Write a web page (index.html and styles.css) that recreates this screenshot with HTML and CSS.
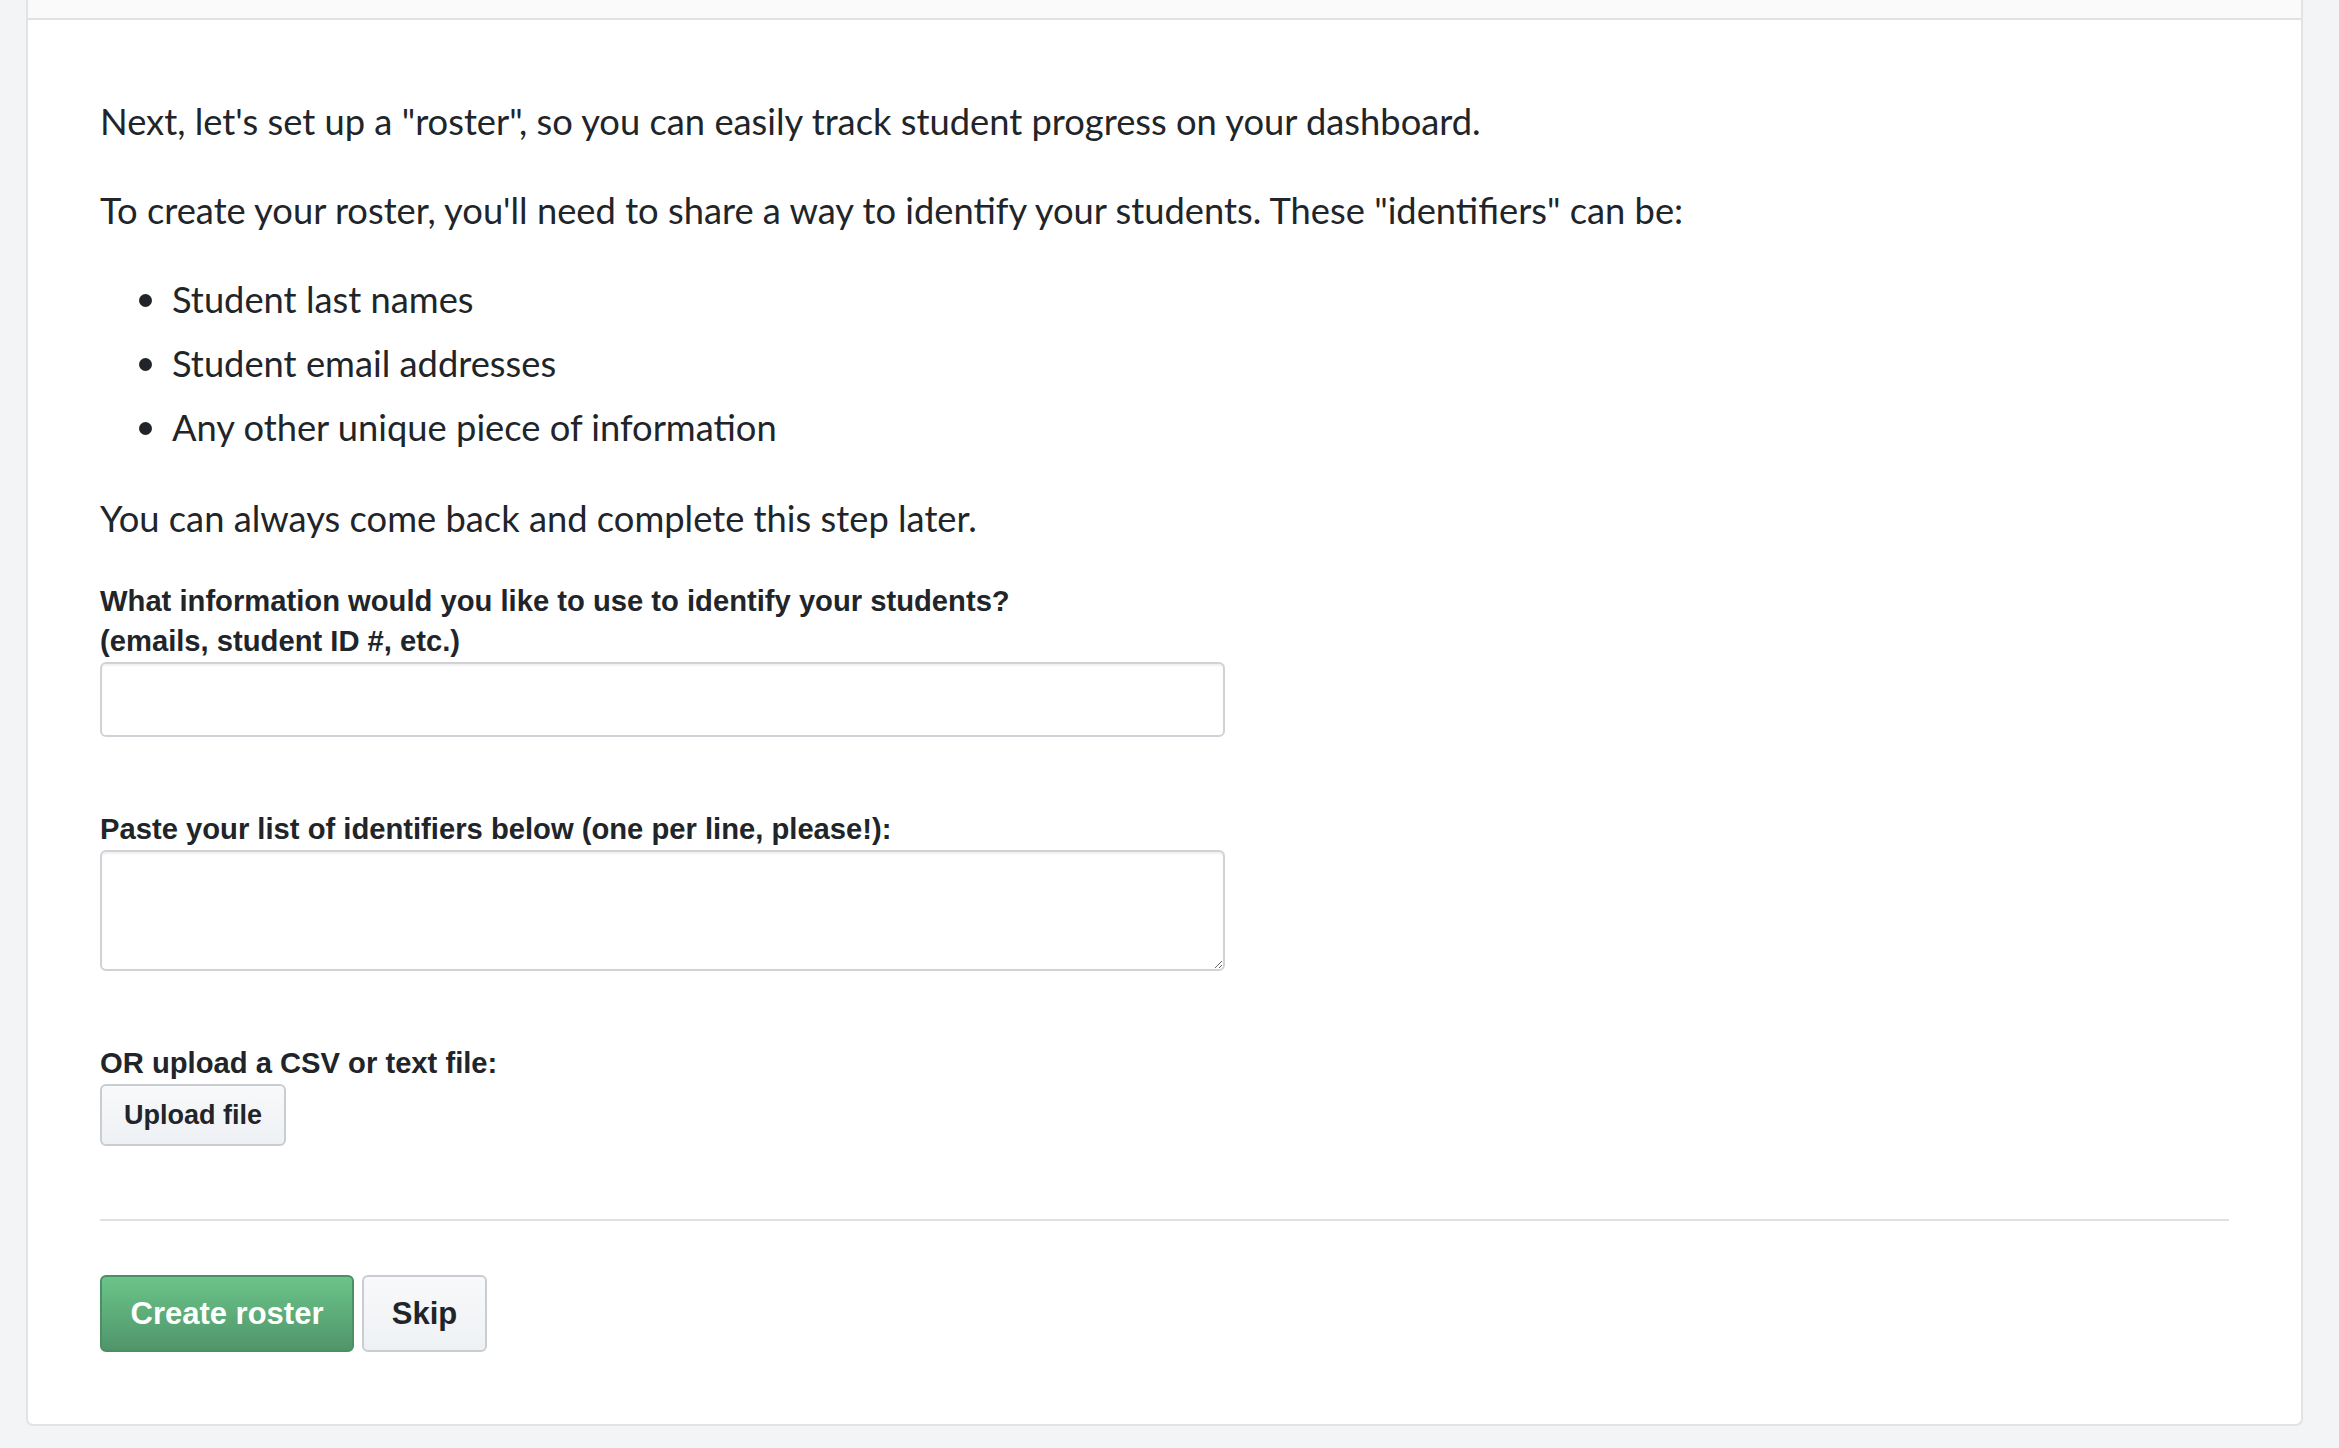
FILE: index.html
```html
<!DOCTYPE html>
<html lang="en">
<head>
<meta charset="utf-8">
<title>Roster setup</title>
<link rel="stylesheet" href="styles.css">
</head>
<body>
<div class="card">
  <div class="card-header"></div>
  <div class="card-body">
    <p class="lead">Next, let's set up a "roster", so you can easily track student progress on your dashboard.</p>
    <p class="lead">To create your roster, you'll need to share a way to identify your students. These "identifiers" can be:</p>
    <ul class="lead-list">
      <li>Student last names</li>
      <li>Student email addresses</li>
      <li>Any other unique piece of information</li>
    </ul>
    <p class="lead">You can always come back and complete this step later.</p>

    <div class="form-group">
      <label class="label" for="ident">What information would you like to use to identify your students?<br>(emails, student ID #, etc.)</label>
      <input class="control input" id="ident" type="text">
    </div>

    <div class="form-group">
      <label class="label" for="list">Paste your list of identifiers below (one per line, please!):</label>
      <textarea class="control textarea" id="list"></textarea>
    </div>

    <div class="form-group upload-group">
      <div class="label">OR upload a CSV or text file:</div>
      <button class="btn btn-light btn-small" type="button">Upload file</button>
    </div>

    <hr class="divider">

    <div class="actions">
      <button class="btn btn-green" type="button">Create roster</button>
      <button class="btn btn-light" type="button">Skip</button>
    </div>
  </div>
</div>
</body>
</html>
```

FILE: styles.css
```css
html, body {
  margin: 0;
  padding: 0;
}

body {
  background: #f3f4f6;
  color: #212529;
  font-family: "Lato", "Open Sans", sans-serif;
  height: 1448px;
  overflow: hidden;
}

.card {
  margin: 0 36px 0 26px;
  background: #ffffff;
  border: 2px solid #e3e3e3;
  border-top: none;
  border-radius: 0 0 7px 7px;
}

.card-header {
  height: 18px;
  background: #fafafa;
  border-bottom: 2px solid #e2e2e2;
}

.card-body {
  padding: 69px 72px 72px 72px;
}

.lead {
  margin: 0 0 25px 0;
  font-size: 36.3px;
  line-height: 64px;
  font-weight: 400;
}

.lead-list {
  margin: 0 0 27px 0;
  padding: 0 0 0 39px;
  list-style: none;
  font-size: 36.3px;
  line-height: 64px;
}

.lead-list li {
  display: flex;
  align-items: center;
}

.lead-list li::before {
  content: "";
  flex: none;
  width: 13px;
  height: 13px;
  border-radius: 50%;
  background: #212529;
  margin-right: 20px;
  margin-top: 2px;
}

.form-group {
  margin-top: 31px;
}

.form-group + .form-group {
  margin-top: 72px;
}

.label {
  display: block;
  font-family: "Liberation Sans", Arial, sans-serif;
  font-weight: 700;
  font-size: 29.2px;
  line-height: 40px;
  margin-bottom: 1px;
  color: #212529;
}

.control {
  display: block;
  box-sizing: border-box;
  width: 1125px;
  border: 2px solid #cfd3d7;
  border-radius: 6px;
  background: #ffffff;
  box-shadow: inset 0 2px 2px rgba(0, 0, 0, 0.06);
  font-family: "Liberation Sans", Arial, sans-serif;
  font-size: 28px;
  padding: 8px 16px;
  margin: 0;
}

.input {
  height: 75px;
}

.textarea {
  height: 121px;
  margin-top: 1px;
  resize: vertical;
}

.btn {
  box-sizing: border-box;
  font-family: "Liberation Sans", Arial, sans-serif;
  font-weight: 700;
  font-size: 31px;
  height: 77px;
  padding: 0 27px;
  border-radius: 6px;
  cursor: pointer;
  margin: 0;
}

.btn-light {
  color: #212529;
  background: linear-gradient(#f8f9fa, #eef1f4);
  border: 2px solid #c9cdd1;
}

.btn-small {
  display: block;
  height: 62px;
  font-size: 27px;
  padding: 0 22px;
  width: 186px;
}

.btn-green {
  color: #ffffff;
  background: linear-gradient(#6bc489, #50956a);
  border: 2px solid #4c8f62;
  width: 254px;
  padding: 0;
}

.actions {
  display: flex;
  gap: 8px;
}

.actions .btn-light {
  width: 125px;
  padding: 0;
}

.divider {
  border: none;
  border-top: 2px solid #e1e1e1;
  margin: 73px 0 54px 0;
  height: 0;
}
```
